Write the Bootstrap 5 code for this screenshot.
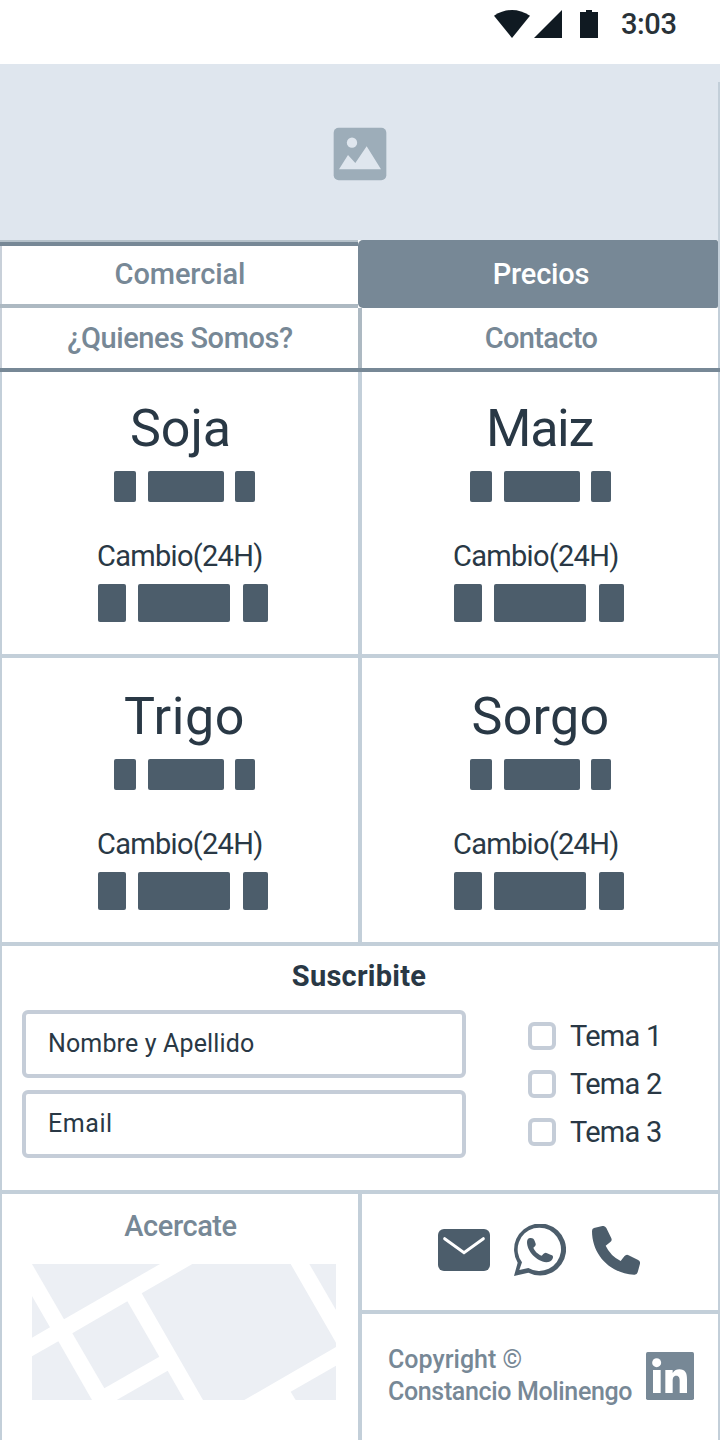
<!DOCTYPE html>
<html lang="es">
<head>
<meta charset="utf-8">
<meta name="viewport" content="width=device-width, initial-scale=1">
<title>Precios</title>
<link href="https://cdn.jsdelivr.net/npm/bootstrap@5.3.0/dist/css/bootstrap.min.css" rel="stylesheet">
<style>
  :root { --line: #c3cfd9; --slate: #778896; --ink: #293845; --bar: #4c5d6b; --field: #c5cdd8; }
  body { width: 720px; height: 1440px; overflow: hidden; background: #fff; color: var(--ink);
         font-family: Roboto, "Liberation Sans", sans-serif; font-size: 29px; line-height: 32px; }
  svg { display: block; flex: none; }
  .medium { font-weight: 500; }
  .status { height: 64px; padding: 8px 43.5px 0 0; color: #101a22; }
  .clock { color: #293238; letter-spacing: -.37px; margin-left: 22.5px; }
  .status svg { margin-top: 2px; }
  .battery { margin-left: 18px; }
  .hero { height: 176px; background: #dfe6ee; }
  .hero::after { content: ""; position: absolute; right: 0; top: 18px; bottom: 0; width: 2px; background: var(--line); }
  .hero svg { margin-top: 4px; }
  .tabs { color: var(--slate); border-right: 2px solid var(--line); }
  .tab-a, .tab-on { height: 68px; }
  .tab-a { width: 358px; border: solid #adb9c2; border-width: 2px 0 4px; padding: 2px 0 0 2px; border-top-color: #b5c1ca;
           box-shadow: inset 0 4px var(--slate), inset 2px 0 #c8d0d9; letter-spacing: -.1px; }
  .tab-on { width: 360px; background: var(--slate); color: #fff; border-radius: 5px 2px 2px 5px; padding-left: 6px; letter-spacing: -.17px; }
  .tab-c, .tab-d { height: 60px; }
  .tab-c { width: 362px; border: solid #adb9c2; border-width: 0 4px 0 2px; border-left-color: #c8d0d9; letter-spacing: -.42px; }
  .tab-d { width: 356px; padding-left: 2px; letter-spacing: -.65px; }
  .rule-dark { height: 4px; background: var(--slate); }
  .frame { height: 1068px; border: solid var(--line); border-width: 0 2px; }
  .half-l { width: 360px; border-right: 4px solid var(--line); }
  .half-r { width: 356px; }
  .price { height: 286px; border-bottom: 4px solid var(--line); padding-top: 31px; }
  .half-l.price { padding-left: 4px; }
  .price-b { height: 288px; padding-top: 33px; }
  .crop { font-size: 52px; line-height: 52px; font-weight: 400; margin: 0; }
  .bars i { display: block; background: var(--bar); border-radius: 2px; }
  .bars-s { margin: 16px 0 0 108px; gap: 11.2px; height: 31px; }
  .bars-s i:nth-child(1) { width: 22.4px; } .bars-s i:nth-child(2) { width: 76.2px; } .bars-s i:nth-child(3) { width: 19.8px; }
  .change { margin: 38px 0 0 91px; letter-spacing: -.7px; font-weight: 400; }
  .bars-l { margin: 12px 0 0 92px; gap: 12.4px; height: 38px; }
  .bars-l i:nth-child(1) { width: 27.8px; } .bars-l i:nth-child(2) { width: 92.3px; } .bars-l i:nth-child(3) { width: 24.8px; }
  .subscribe { height: 248px; border-bottom: 4px solid var(--line); padding: 14px 20px 0; }
  .subscribe h2 { font-size: 29px; line-height: 32px; font-weight: 700; letter-spacing: .26px; margin: 0 0 18px; padding-right: 2px; }
  .fields { width: 444px; gap: 12px; }
  .fields .form-control { height: 68px; border: 4px solid var(--field); border-radius: 6px; padding: 0 22px 1px;
                          font-size: 25px; letter-spacing: .14px; color: var(--ink); }
  .fields .form-control::placeholder { color: var(--ink); opacity: 1; }
  .fields .mail { letter-spacing: .55px; }
  .topics { margin: 10px 0 0 62px; gap: 16px; letter-spacing: -.75px; font-weight: 450; }
  .topics label { gap: 14px; }
  .topics .form-check-input { width: 28px; height: 28px; border: 4px solid var(--field); border-radius: 6px; margin: 0; }
  .foot { height: 246px; color: var(--slate); }
  .visit { padding: 16px 0 0 30px; }
  .visit p { width: 297px; letter-spacing: -.44px; margin: 0 0 22px; }
  .contact { height: 120px; border-bottom: 4px solid var(--line); padding: 0 0 4px 76px; color: var(--bar); }
  .legal { padding: 30px 24px 0 26px; font-size: 25px; }
  .legal svg { margin-top: 8px; }
</style>
</head>
<body>
<header>
  <div class="status d-flex justify-content-end align-items-start">
    <svg width="36" height="28" viewBox="0 0 108 84" fill="currentColor"><path d="M0 17Q54-17 108 17L54 84Z"/></svg>
    <svg class="ms-1" width="28" height="28" viewBox="0 0 28 28" fill="currentColor"><path d="M28 0V28H0Z"/></svg>
    <svg class="battery" width="18" height="28" viewBox="0 0 18 28" fill="currentColor"><path d="M6 0H12V2H18V28H0V2H6Z"/></svg>
    <span class="clock medium">3:03</span>
  </div>
  <div class="hero position-relative d-flex justify-content-center align-items-center">
    <svg width="54" height="54" viewBox="99 50 162 162">
      <rect x="101" y="52" width="158" height="158" rx="15" fill="#9dadb9"/>
      <circle cx="156" cy="97" r="15.5" fill="#dfe6ee"/>
      <path d="M117 177L144 134L166 158L200 108L243 177Z" fill="#dfe6ee"/>
    </svg>
  </div>
</header>

<nav class="medium">
  <div class="tabs d-flex flex-wrap">
    <div class="tab-a d-flex justify-content-center align-items-center">Comercial</div>
    <div class="tab-on d-flex justify-content-center align-items-center">Precios</div>
    <div class="tab-c d-flex justify-content-center align-items-center">¿Quienes Somos?</div>
    <div class="tab-d d-flex justify-content-center align-items-center">Contacto</div>
  </div>
  <div class="rule-dark"></div>
</nav>

<main class="frame">
  <section class="d-flex flex-wrap">
    <article class="price half-l">
      <h1 class="crop text-center" style="letter-spacing:-.1px;padding-right:3px">Soja</h1>
      <div class="bars bars-s d-flex"><i></i><i></i><i></i></div>
      <p class="change">Cambio(24H)</p>
      <div class="bars bars-l d-flex"><i></i><i></i><i></i></div>
    </article>
    <article class="price half-r">
      <h1 class="crop text-center" style="letter-spacing:-1.3px;padding-right:1px">Maiz</h1>
      <div class="bars bars-s d-flex"><i></i><i></i><i></i></div>
      <p class="change">Cambio(24H)</p>
      <div class="bars bars-l d-flex"><i></i><i></i><i></i></div>
    </article>
    <article class="price price-b half-l">
      <h1 class="crop text-center" style="letter-spacing:.6px;padding-left:5px">Trigo</h1>
      <div class="bars bars-s d-flex"><i></i><i></i><i></i></div>
      <p class="change">Cambio(24H)</p>
      <div class="bars bars-l d-flex"><i></i><i></i><i></i></div>
    </article>
    <article class="price price-b half-r">
      <h1 class="crop text-center" style="letter-spacing:.28px;padding-left:1px">Sorgo</h1>
      <div class="bars bars-s d-flex"><i></i><i></i><i></i></div>
      <p class="change">Cambio(24H)</p>
      <div class="bars bars-l d-flex"><i></i><i></i><i></i></div>
    </article>
  </section>

  <section class="subscribe">
    <h2 class="text-center">Suscribite</h2>
    <form class="d-flex align-items-start">
      <div class="fields d-flex flex-column">
        <input class="form-control" type="text" placeholder="Nombre y Apellido">
        <input class="form-control mail" type="text" placeholder="Email">
      </div>
      <div class="topics d-flex flex-column">
        <label class="d-flex align-items-center"><input class="form-check-input" type="checkbox">Tema 1</label>
        <label class="d-flex align-items-center"><input class="form-check-input" type="checkbox">Tema 2</label>
        <label class="d-flex align-items-center"><input class="form-check-input" type="checkbox">Tema 3</label>
      </div>
    </form>
  </section>

  <footer class="foot d-flex">
    <div class="half-l visit">
      <p class="text-center medium">Acercate</p>
      <svg width="304" height="136" viewBox="96 252 912 408" fill="#eceff4">
        <path d="M96 252H480L192 418Z"/>
        <path d="M96 348L150 442L96 473Z"/>
        <path d="M96 529L175 484L276 660H96Z"/>
        <path d="M217 460L382 364L478 530L313 625Z"/>
        <path d="M350 660L503 572L553 660Z"/>
        <path d="M425 340L577 252H872L1008 488V501L733 660H609Z"/>
        <path d="M928 252H1008V390Z"/>
        <path d="M1008 557V660H887L872 635Z"/>
      </svg>
    </div>
    <div class="half-r">
      <div class="contact d-flex align-items-center">
        <svg width="52" height="42" viewBox="0 0 156 126"><rect width="156" height="126" rx="18" fill="currentColor"/><path d="M20 29L78 71L136 29" fill="none" stroke="#fff" stroke-width="9" stroke-linecap="round"/></svg>
        <svg class="ms-4" width="52" height="52" viewBox="0 0 156 156" fill="currentColor">
          <path fill-rule="evenodd" d="M11 116A78 78 0 1 1 43 146L0 156ZM24 115L16 138L43 132A65 65 0 1 0 24 115Z"/>
          <path d="M39 54C39 46 44 41 50 42C57 42 60 45 62 51L65 59C67 64 61 68 58 71C62 82 73 91 83 95C86 93 89 86 95 86C100 87 109 92 114 94C119 97 117 102 115 106C112 112 105 115 97 115C67 111 39 82 39 54Z"/>
        </svg>
        <svg style="margin-left:26px" width="48" height="49" viewBox="516 77 144 147" fill="currentColor">
          <path d="M522 83L547 77Q555 76 559 83L574 114Q577 120 571 125L557 136Q571 166 602 182L613 168Q618 162 624 164L653 178Q662 182 660 190L653 216Q651 224 642 223C569 219 516 163 516 92Q516 85 522 83Z"/>
        </svg>
      </div>
      <div class="legal d-flex justify-content-between align-items-start">
        <div class="medium"><div>Copyright ©</div><div class="text-nowrap" style="letter-spacing:-.35px">Constancio Molinengo</div></div>
        <svg width="48" height="48" viewBox="918 156 144 144">
          <rect x="918" y="156" width="144" height="144" rx="5" fill="#778896"/>
          <circle cx="950" cy="188" r="13.5" fill="#fff"/>
          <path fill="#fff" d="M939 210H962V279H939ZM976 210H998V219C1003 211 1010 208 1018 208C1036 208 1041 219 1041 238V279H1019V243C1019 234 1017 227 1009 227C1000 227 998 234 998 243V279H976Z"/>
        </svg>
      </div>
    </div>
  </footer>
</main>
<script src="https://cdn.jsdelivr.net/npm/bootstrap@5.3.0/dist/js/bootstrap.bundle.min.js"></script>
</body>
</html>
